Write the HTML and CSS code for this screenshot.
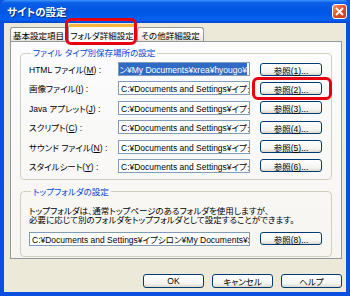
FILE: index.html
```html
<!DOCTYPE html>
<html lang="ja">
<head>
    <meta charset="UTF-8">
    <meta name="viewport" content="width=device-width, initial-scale=1.0">
    <title>サイトの設定</title>
    <link rel="stylesheet" href="styles.css">
</head>
<body>

    <div class="window">
        <div class="titlebar">
            <span class="title">サイトの設定</span>
            <span class="close">
                <svg width="9" height="9" viewBox="0 0 9 9"><path d="M1 1L8 8M8 1L1 8" stroke="#fff" stroke-width="1.8"/></svg>
            </span>
        </div>

        <div class="frame">
            <div class="tabs">
                <div class="tab">基本設定項目</div>
                <div class="tab active marked">フォルダ詳細設定</div>
                <div class="tab">その他詳細設定</div>
            </div>

            <div class="panel">
                <fieldset class="group">
                    <legend>ファイル タイプ別保存場所の設定</legend>
                    <div class="rows">
                        <div class="row">
                            <span class="label">HTML ファイル(<u>M</u>) :</span>
                            <div class="field selected"><span>C:¥Documents and Settings¥イプシロン¥My Documents¥xrea¥hyougo¥</span></div>
                            <button class="btn">参照(<u>1</u>)...</button>
                        </div>
                        <div class="row">
                            <span class="label">画像ファイル(<u>I</u>) :</span>
                            <div class="field"><span>C:¥Documents and Settings¥イプシロン¥My Documents</span></div>
                            <button class="btn marked">参照(<u>2</u>)...</button>
                        </div>
                        <div class="row">
                            <span class="label">Java アプレット(<u>J</u>) :</span>
                            <div class="field"><span>C:¥Documents and Settings¥イプシロン¥My Documents</span></div>
                            <button class="btn">参照(<u>3</u>)...</button>
                        </div>
                        <div class="row">
                            <span class="label">スクリプト(<u>C</u>) :</span>
                            <div class="field"><span>C:¥Documents and Settings¥イプシロン¥My Documents</span></div>
                            <button class="btn">参照(<u>4</u>)...</button>
                        </div>
                        <div class="row">
                            <span class="label">サウンド ファイル(<u>N</u>) :</span>
                            <div class="field"><span>C:¥Documents and Settings¥イプシロン¥My Documents</span></div>
                            <button class="btn">参照(<u>5</u>)...</button>
                        </div>
                        <div class="row">
                            <span class="label">スタイルシート(<u>Y</u>) :</span>
                            <div class="field"><span>C:¥Documents and Settings¥イプシロン¥My Documents</span></div>
                            <button class="btn">参照(<u>6</u>)...</button>
                        </div>
                    </div>
                </fieldset>

                <fieldset class="group top-group">
                    <legend>トップフォルダの設定</legend>
                    <p class="note">トップフォルダは、通常トップページのあるフォルダを使用しますが、<br>必要に応じて別のフォルダをトップフォルダとして設定することができます。</p>
                    <div class="row">
                        <div class="field"><span>C:¥Documents and Settings¥イプシロン¥My Documents¥xrea¥hyougo¥</span></div>
                        <button class="btn">参照(<u>8</u>)...</button>
                    </div>
                </fieldset>
            </div>

            <div class="actions">
                <button class="btn big">OK</button>
                <button class="btn big">キャンセル</button>
                <button class="btn big">ヘルプ</button>
            </div>
        </div>
    </div>

</body>
</html>
```

FILE: styles.css
```css
body {
    margin: 0;
    font-family: "Liberation Sans", "Noto Sans CJK JP", sans-serif;
    font-feature-settings: "palt";
    font-size: 8.5px;
    color: #000;
}
.window {
    width: 350px;
    height: 296px;
    display: flex;
    flex-direction: column;
    background: #0a4fe0;
}
.titlebar {
    height: 23px;
    display: flex;
    align-items: center;
    justify-content: space-between;
    padding: 0 3px 0 7px;
    background: linear-gradient(#3d95ff 0%, #0a5ee6 12%, #0055e5 50%, #0260f0 85%, #0046cf 100%);
    border-radius: 6px 6px 0 0;
}
.title {
    color: #fff;
    font-weight: bold;
    font-size: 10.5px;
    text-shadow: 1px 1px 0 #0a2a80;
}
.close {
    width: 15px;
    height: 15px;
    box-sizing: border-box;
    display: flex;
    align-items: center;
    justify-content: center;
    border: 1px solid #fff;
    border-radius: 3px;
    background: linear-gradient(135deg, #f39b7c, #e2542e 45%, #c5371a);
}
.frame {
    flex: 1;
    display: flex;
    flex-direction: column;
    margin: 0 4px 4px;
    background: #ece9d8;
}

/* tabs */
.tabs {
    height: 18px;
    display: flex;
    align-items: flex-end;
    padding-left: 6px;
}
.tab {
    height: 14px;
    box-sizing: border-box;
    display: flex;
    align-items: center;
    justify-content: center;
    border: 1px solid #919b9c;
    border-bottom: none;
    border-radius: 3px 3px 0 0;
    background: linear-gradient(#fff, #f3f3ef 60%, #e6e4da);
    width: 67px;
    margin-left: 1px;
}
.tab:first-child {
    width: 57px;
    margin-left: 0;
}
.tab.active {
    position: relative;
    z-index: 1;
    width: 68px;
    height: 18px;
    margin-bottom: -1px;
    background: #fcfcfe;
    border-top: 3px solid #f6b63c;
}
.marked::after {
    content: "";
    position: absolute;
    border: 3px solid #e60012;
    border-radius: 6px;
}
.tab.marked::after {
    left: -4px;
    right: -2px;
    top: -9px;
    bottom: -3px;
}

.panel {
    height: 218px;
    box-sizing: border-box;
    margin: 0 4px 0 6px;
    padding: 0 9px;
    border: 1px solid #919b9c;
    background: linear-gradient(#fcfcfe, #f6f5f0);
}
.group {
    min-width: 0;
    margin: 5px 0 0;
    padding: 3px 9px 6px 8px;
    border: 1px solid #d0d0bf;
    border-radius: 4px;
}
.group legend {
    color: #0046d5;
    line-height: 12px;
    padding: 0 2px;
    margin-left: 2px;
}
.top-group {
    margin-top: 6px;
    padding-bottom: 10px;
}
.rows {
    display: flex;
    flex-direction: column;
    gap: 5.4px;
}
.row {
    height: 14px;
    display: flex;
    align-items: center;
}
.label {
    width: 89px;
    flex: none;
    white-space: nowrap;
}
.field {
    flex: 1;
    min-width: 0;
    height: 14px;
    box-sizing: border-box;
    display: flex;
    align-items: center;
    padding: 0 2px;
    overflow: hidden;
    white-space: nowrap;
    border: 1px solid #7f9db9;
    background: #fff;
}
.field span {
    flex: none;
}
.field.selected {
    justify-content: flex-end;
}
.field.selected span {
    background: #316ac5;
    color: #fff;
}
.btn {
    position: relative;
    width: 62px;
    height: 13px;
    flex: none;
    margin-left: 10px;
    padding: 0;
    font: inherit;
    color: #000;
    border: 1px solid #003c74;
    border-radius: 3px;
    background: linear-gradient(#fff, #f4f4f0 70%, #dcd8cc);
}
.btn.marked::after {
    left: -9px;
    right: -11px;
    top: -6px;
    bottom: -6px;
}
.note {
    margin: 6px 0 6px;
    line-height: 9.5px;
    white-space: nowrap;
}

.actions {
    display: flex;
    justify-content: flex-end;
    gap: 8px;
    margin: 15px 4px 0 0;
}
.btn.big {
    width: 61px;
    height: 14px;
    margin-left: 0;
}
```
